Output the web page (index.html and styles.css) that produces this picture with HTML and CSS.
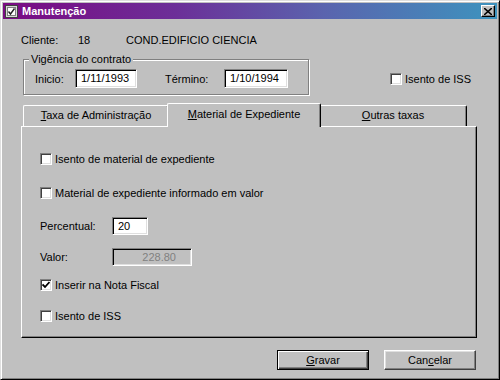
FILE: index.html
```html
<!DOCTYPE html>
<html lang="pt">
<head>
  <meta charset="UTF-8" />
  <title>Manutenção</title>
  <link rel="stylesheet" href="styles.css">
</head>
<body>

  <div class="window">
    <div class="titlebar">
      <span class="title-icon">
        <svg width="13" height="13" viewBox="0 0 13 13">
          <rect x="0.5" y="0.5" width="12" height="12" fill="#d8d8d8" stroke="#404040"/>
          <rect x="2.5" y="2.5" width="8" height="8" fill="#fff" stroke="#808080"/>
          <path d="M3.5 6.5 L5.5 9 L9.5 3.5" fill="none" stroke="#202020" stroke-width="1.4"/>
        </svg>
      </span>
      <span class="title-text">Manutenção</span>
      <span class="close-btn">
        <svg width="8" height="7" viewBox="0 0 8 7">
          <path d="M0 0 L8 7 M8 0 L0 7" stroke="#000" stroke-width="1.6"/>
        </svg>
      </span>
    </div>

    <div class="content">
      <div class="client-row">
        <span class="lbl-cliente">Cliente:</span>
        <span class="client-code">18</span>
        <span>COND.EDIFICIO CIENCIA</span>
      </div>

      <div class="contract-row">
        <fieldset class="group">
          <legend>Vigência do contrato</legend>
          <div class="group-body">
            <span class="lbl-inicio">Inicio:</span>
            <span class="field date-start">1/11/1993</span>
            <span class="lbl-termino">Término:</span>
            <span class="field date-end">1/10/1994</span>
          </div>
        </fieldset>
        <label class="check iss-top"><span class="box"></span>Isento de ISS</label>
      </div>

      <div class="tabs">
        <div class="tab tab-first"><u>T</u>axa de Administração</div>
        <div class="tab tab-active"><u>M</u>aterial de Expediente</div>
        <div class="tab tab-last"><u>O</u>utras taxas</div>
      </div>

      <div class="panel">
        <label class="check"><span class="box"></span>Isento de material de expediente</label>
        <label class="check"><span class="box"></span>Material de expediente informado em valor</label>
        <div class="field-row">
          <span class="lbl-field">Percentual:</span>
          <span class="field pct">20</span>
        </div>
        <div class="field-row">
          <span class="lbl-field">Valor:</span>
          <span class="field valor disabled">228.80</span>
        </div>
        <label class="check">
          <span class="box">
            <svg width="8" height="8" viewBox="0 0 8 8"><path d="M0.5 3.5 L3 6 L7.5 1" fill="none" stroke="#000" stroke-width="1.8"/></svg>
          </span>Inserir na Nota Fiscal
        </label>
        <label class="check"><span class="box"></span>Isento de ISS</label>
      </div>

      <div class="buttons">
        <button class="btn btn-default"><u>G</u>ravar</button>
        <button class="btn">Can<u>c</u>elar</button>
      </div>
    </div>
  </div>

</body>
</html>
```

FILE: styles.css
```css
body {
  margin: 0;
  font-family: 'Liberation Sans', Arial, sans-serif;
  font-size: 11px;
  color: #000;
  background: #c0c0c0;
}
.window {
  width: 500px;
  height: 380px;
  box-sizing: border-box;
  padding: 2px;
  background: #c0c0c0;
  border: 1px solid;
  border-color: #dfdfdf #000 #000 #dfdfdf;
  box-shadow: inset 1px 1px 0 #fff, inset -1px -1px 0 #808080;
}

/* title bar */
.titlebar {
  height: 16px;
  display: flex;
  align-items: center;
  padding: 0 2px;
  background: linear-gradient(to right, #7a0a82 0%, #6c2f98 35%, #5a64ae 65%, #3d93be 100%);
}
.title-icon { display: flex; width: 13px; height: 13px; margin-right: 4px; }
.title-text { color: #fff; font-weight: bold; flex: 1; }
.close-btn {
  width: 14px;
  height: 12px;
  box-sizing: border-box;
  display: flex;
  align-items: center;
  justify-content: center;
  background: #c0c0c0;
  border: 1px solid;
  border-color: #fff #000 #000 #fff;
  box-shadow: inset -1px -1px 0 #808080;
}

.content { padding: 15px 20px 0 18px; }

.client-row { display: flex; height: 13px; line-height: 13px; }
.lbl-cliente { width: 57px; }
.client-code { width: 48px; }

/* contract group */
.contract-row { display: flex; margin-top: 6px; }
.group {
  margin: 0 0 0 2px;
  padding: 0;
  width: 286px;
  box-sizing: border-box;
  border: 1px solid #808080;
  box-shadow: inset 1px 1px 0 #fff, 1px 1px 0 #fff;
}
.group legend {
  margin-left: 5px;
  padding: 0 2px;
  line-height: 13px;
  background: #c0c0c0;
}
.group-body {
  display: flex;
  align-items: center;
  padding: 3px 0 6px 11px;
}
.lbl-inicio { width: 40px; }
.lbl-termino { width: 59px; margin-left: 28px; }

.field {
  height: 19px;
  box-sizing: border-box;
  padding: 0 5px;
  line-height: 17px;
  background: #fff;
  border: 1px solid;
  border-color: #808080 #fff #fff #808080;
  box-shadow: inset 1px 1px 0 #000, inset -1px -1px 0 #dfdfdf;
}
.date-start { width: 62px; }
.date-end { width: 64px; }

/* checkboxes */
.check { display: flex; align-items: center; height: 20px; }
.check .box {
  width: 12px;
  height: 12px;
  box-sizing: border-box;
  margin-right: 3px;
  display: flex;
  align-items: center;
  justify-content: center;
  background: #fff;
  border: 1px solid;
  border-color: #808080 #fff #fff #808080;
  box-shadow: inset 1px 1px 0 #404040, inset -1px -1px 0 #dfdfdf;
}
.iss-top { margin: 16px 0 0 81px; align-self: flex-start; }

/* tabs */
.tabs {
  display: flex;
  align-items: flex-end;
  margin-top: 8px;
  padding-left: 2px;
}
.tab {
  height: 21px;
  box-sizing: border-box;
  line-height: 19px;
  text-align: center;
  background: #c0c0c0;
  border: 1px solid;
  border-bottom: none;
  border-color: #fff #000 #000 #fff;
  border-radius: 2px 2px 0 0;
  box-shadow: inset -1px 0 0 #808080;
}
.tab-first { width: 146px; }
.tab-active {
  width: 154px;
  height: 24px;
  line-height: 20px;
  margin: 0 -2px -1px -2px;
  position: relative;
  z-index: 1;
}
.tab-last { width: 148px; }

/* tab page */
.panel {
  width: 456px;
  height: 212px;
  box-sizing: border-box;
  padding: 22px 0 0 18px;
  border: 1px solid;
  border-color: #fff #000 #000 #fff;
  box-shadow: inset -1px -1px 0 #808080;
  display: grid;
  grid-template-rows: 34px 33px 31px 28px 31px 20px;
  align-items: start;
}
.field-row { display: flex; align-items: center; height: 20px; }
.lbl-field { width: 72px; }
.pct { width: 36px; height: 18px; line-height: 16px; }
.valor {
  width: 80px;
  height: 18px;
  line-height: 16px;
  text-align: right;
  padding-right: 15px;
}
.disabled { background: #c0c0c0; color: #808080; }

/* buttons */
.buttons {
  display: flex;
  justify-content: flex-end;
  gap: 15px;
  margin-top: 12px;
  padding-right: 1px;
}
.btn {
  width: 92px;
  height: 20px;
  padding: 0;
  font-family: inherit;
  font-size: 11px;
  color: #000;
  background: #c0c0c0;
  border: 1px solid;
  border-color: #fff #404040 #404040 #fff;
  box-shadow: inset -1px -1px 0 #808080, inset 1px 1px 0 #dfdfdf;
}
.btn-default {
  border: 1px solid #000;
  box-shadow: inset 1px 1px 0 #fff, inset -1px -1px 0 #404040, inset -2px -2px 0 #808080;
}
```
